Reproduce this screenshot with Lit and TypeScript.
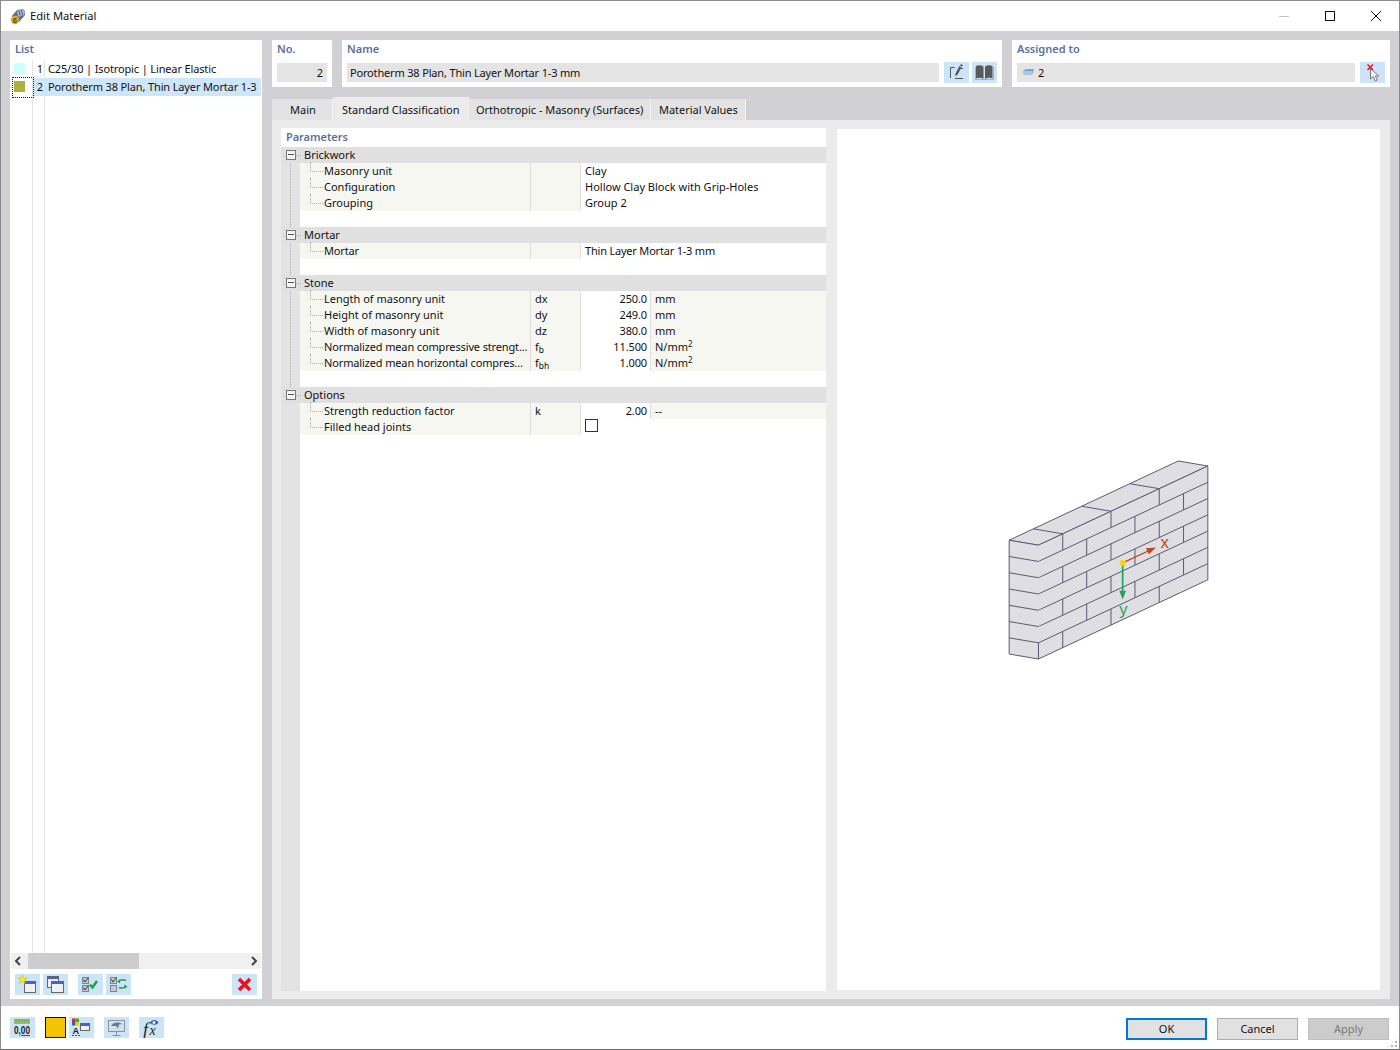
import { LitElement, html, css, svg } from "lit";
import { customElement } from "lit/decorators.js";

type Row = { l: string; s?: any; v?: string; u?: any; check?: boolean; text?: boolean; tight?: boolean };
const sup2 = html`N/mm<sup>2</sup>`;
const groups: { name: string; rows: Row[]; blank: boolean }[] = [
  { name: "Brickwork", blank: true, rows: [
    { l: "Masonry unit", v: "Clay", text: true },
    { l: "Configuration", v: "Hollow Clay Block with Grip-Holes", text: true },
    { l: "Grouping", v: "Group 2", text: true } ] },
  { name: "Mortar", blank: true, rows: [{ l: "Mortar", v: "Thin Layer Mortar 1-3 mm", text: true, tight: true }] },
  { name: "Stone", blank: true, rows: [
    { l: "Length of masonry unit", s: "dx", v: "250.0", u: "mm" },
    { l: "Height of masonry unit", s: "dy", v: "249.0", u: "mm" },
    { l: "Width of masonry unit", s: "dz", v: "380.0", u: "mm" },
    { l: "Normalized mean compressive strengt...", s: html`f<sub>b</sub>`, v: "11.500", u: sup2, tight: true },
    { l: "Normalized mean horizontal compres...", s: html`f<sub>bh</sub>`, v: "1.000", u: sup2, tight: true } ] },
  { name: "Options", blank: false, rows: [
    { l: "Strength reduction factor", s: "k", v: "2.00", u: "--" },
    { l: "Filled head joints", check: true } ] },
];

function wall() {
  const k = 48.9;
  const lines: any[] = [];
  for (let i = 1; i < 7; i++) {
    lines.push(svg`<polyline points="27,${268 + k * i} 115,${283 + k * i} 624,${45 + k * i}"/>`);
  }
  const yAt = (x: number) => 283 - 0.4676 * (x - 115);
  for (let c = 0; c < 7; c++) {
    const xs = c % 2 === 0 ? [188, 333, 478] : [260, 405, 551];
    for (const x of xs) {
      const y = yAt(x) + k * c;
      lines.push(svg`<line x1=${x} y1=${y} x2=${x} y2=${y + k}/>`);
    }
  }
  for (const x of [188, 333, 478]) {
    const y = yAt(x);
    lines.push(svg`<line x1=${x} y1=${y} x2=${x - 88} y2=${y - 15}/>`);
  }
  return html`<svg class="wall" width="201" height="200" viewBox="24 27 603 601">
    <g fill="#dedee3" stroke="#5a5a70" stroke-width="3" stroke-linejoin="round">
      <polygon points="27,268 535,30 624,45 115,283"/>
      <polygon points="115,283 624,45 624,387 115,625"/>
      <polygon points="27,268 115,283 115,625 27,610"/>
      ${lines}
    </g>
    <line x1="368" y1="336" x2="448" y2="299" stroke="#c2451e" stroke-width="4"/>
    <polygon points="468,290 438,292 447,310" fill="#c2451e"/>
    <line x1="368" y1="336" x2="368" y2="425" stroke="#1fa35c" stroke-width="5"/>
    <polygon points="368,446 358,420 378,420" fill="#1fa35c"/>
    <circle cx="368" cy="336" r="9" fill="#f7d417"/>
    <text x="482" y="290" font-size="50" fill="#c2451e" font-family="Liberation Sans, sans-serif">x</text>
    <text x="358" y="493" font-size="50" fill="#1fa35c" font-family="Liberation Sans, sans-serif">y</text>
  </svg>`;
}

const win = (x: number, y: number, w: number, h: number) => svg`
  <rect x=${x + .5} y=${y + .5} width=${w} height=${h} fill="#eef0f2" stroke="#666"/>
  <rect x=${x + 1} y=${y + 1} width=${w - 1} height="2" fill="#4a62c8"/>`;
const cb = (x: number, y: number, tick = true) => svg`
  <rect x=${x + .5} y=${y + .5} width="6" height="6" fill="#c3ccd6" stroke="#7b8794"/>
  ${tick ? svg`<path d="M${x + 1.5} ${y + 2.5}l1.500 2.500 3.500-4.500" fill="none" stroke="#333"/>` : ""}`;
const I = (c: any) => html`<svg width="25" height="21" viewBox="0 0 25 21">${c}</svg>`;

const icons = {
  edit: I(svg`<path d="M10.500 5.500h-4v10.500M11 16.500h8" fill="none" stroke="#555"/><path d="M11 14.500l.8-3.500 3.700-7 2 1.200-3.700 7z" fill="#555"/><path d="M16 3l1.300-.8 1.500 1-.8 1.300z" fill="#333"/><path d="M17 6.500h2" stroke="#555"/>`),
  book: I(svg`<path d="M4 4c2.500-1 5-1 7.500.5V17c-2.500-1.500-5-1.500-7.500-.5z M13 4.500c2.500-1.500 5-1.500 7.500-.5v12.500c-2.500-1-5-1-7.500.5z" fill="#5a5a5a"/><path d="M3.500 5v12.500h18V5" fill="none" stroke="#999" stroke-width=".7"/>`),
  cursor: I(svg`<path d="M10.500 6.500V17l2.700-2.300 2.100 4.300 2-1-2-4h3.500z" fill="#f3f3f3" stroke="#7a7a7a"/><path d="M7.500 2.500l5.500 5.500M13 2.500L7.500 8" stroke="#e8112d" stroke-width="1.500"/>`),
  newWin: I(svg`${win(9, 7, 11, 11)}<path d="M7.500 1l1.200 3 3.300.2-2.500 2 .8 3.200-2.800-1.800-2.800 1.800.8-3.200-2.500-2 3.300-.2z" fill="#f4ee1c" stroke="#bfae10" stroke-width=".5"/>`),
  copyWin: I(svg`${win(4, 2, 11, 11)}${win(8, 7, 12, 11)}`),
  checks: I(svg`${cb(4, 3)}${cb(4, 11)}<path d="M12 10.500l2.500 3 4.500-6.500" fill="none" stroke="#1ea34a" stroke-width="2.500"/>`),
  swap: I(svg`${cb(4, 3)}${cb(4, 11, false)}<path d="M13 7.500c2-2 4.500-2 7-1M20 12.500c-2 1.500-4.500 2-7 1" fill="none" stroke="#2b9d4a" stroke-width="1.500"/><path d="M11 7.500l3-2.500v4.500zM21.500 12.500l-3.200 2.500v-4.500z" fill="#2b9d4a"/>`),
  del: I(svg`<path d="M7 5l11 11M18 5L7 16" stroke="#e8111f" stroke-width="3.500"/>`),
  units: I(svg`<rect x="4" y="2" width="16" height="5" fill="#94bd6c"/><path d="M6 2v3M9 2v3M12 2v3M15 2v3M18 2v3" stroke="#6e9a4a" stroke-width=".7"/><path d="M11 18.500h9" stroke="#2a4fb8"/><text x="4" y="16.500" font-size="10" fill="#222" font-weight="700" textLength="16" lengthAdjust="spacingAndGlyphs" font-family="Liberation Sans, sans-serif">0,00</text>`),
  legend: I(svg`<rect x="3" y="1.500" width="3.500" height="3.500" fill="#e32222"/><rect x="6.500" y="1.500" width="3.500" height="3.500" fill="#34a844"/><rect x="3" y="5" width="3.500" height="3.500" fill="#2a5fd0"/><rect x="6.500" y="5" width="3.500" height="3.500" fill="#f0c910"/>${win(11, 6, 9, 7)}<text x="3.500" y="16.500" font-size="9" font-weight="700" fill="#222" font-family="Liberation Sans, sans-serif">A</text><path d="M3 18.500h8" stroke="#555" stroke-dasharray="2 1"/>`),
  view: I(svg`<rect x="4.500" y="3.500" width="16" height="11" fill="#d7dfe6" stroke="#8896a2"/><path d="M7 9c2-4 8-4.500 11-2l-3 .5-1 4-2-2.500z" fill="#5f7c96"/><path d="M12.500 14.500v3.500M8.500 18.500h8" stroke="#8896a2"/>`),
  fx: I(svg`<text x="4" y="18.500" font-size="18" font-style="italic" font-family="Liberation Serif, serif" fill="#222">f</text><text x="10.500" y="18" font-size="14" font-style="italic" font-family="Liberation Serif, serif" fill="#222">x</text><path d="M11 5.500c2-3.500 6.500-3.500 8.500 0-2 3-6.500 3-8.500 0z" fill="#3a56b0"/><circle cx="15" cy="5.500" r="1.500" fill="#e8eefc"/>`),
};

@customElement("app-root")
export class AppRoot extends LitElement {
  static styles = css`
    :host { display: block; width: 1400px; height: 1050px; font-family: "Noto Sans", "Open Sans", sans-serif; font-size: 11px; color: #111; }
    * { box-sizing: border-box; }
    svg { display: block; }
    .window { width: 1400px; height: 1050px; display: flex; flex-direction: column; border: 1px solid #8c8c8c; border-bottom-color: #6e6e6e; background: #d1d1d5; }
    .title { height: 30px; background: #fff; display: flex; align-items: center; padding-left: 8px; gap: 4px; font-size: 11.200px; flex: none; }
    .title .tt { padding-bottom: 2px; }
    .ctl { margin-left: auto; display: flex; }
    .ctl span { width: 46px; height: 30px; display: flex; align-items: center; justify-content: center; }
    .body { flex: 1; display: flex; gap: 10px; padding: 9px 9px 7px; min-height: 0; }
    .list { width: 252px; background: #fff; display: flex; flex-direction: column; position: relative; flex: none; }
    .cap { color: #5c7099; font-weight: 600; line-height: 16px; height: 20px; padding: 1px 5px; }
    .vline { position: absolute; top: 20px; bottom: 46px; width: 1px; background: #e4e4e4; }
    .vline.a { left: 22px; }
    .vline.b { left: 34px; }
    .items { flex: 1; }
    .item { height: 18px; display: flex; align-items: center; position: relative; }
    .item .sw { width: 11px; height: 11px; margin-left: 4px; margin-top: -2px; }
    .item .sw.c1 { background: #c8ffff; }
    .item .sw.c2 { background: #aeb03e; }
    .item .n { width: 13px; margin-left: 5px; text-align: right; padding-bottom: 2px; }
    .item .t { margin-left: 5px; white-space: nowrap; overflow: hidden; width: 213px; letter-spacing: -.14px; padding-bottom: 2px; }
    .item.sel::before { content: ""; position: absolute; left: 23px; right: 1px; top: 0; bottom: 0; background: #cde6f9; }
    .item.sel::after { content: ""; position: absolute; left: 2px; top: -1px; width: 20px; height: 19px; border: 1px dotted #222; }
    .item > * { position: relative; z-index: 1; }
    .sb { height: 16px; margin: 0 1px; background: #f0f0f0; display: flex; align-items: center; justify-content: space-between; position: relative; padding: 0 3px; }
    .thumb { position: absolute; left: 17px; width: 111px; top: 0; bottom: 0; background: #cdcdcd; }
    .tools { height: 30px; padding: 5px; display: flex; gap: 3px; }
    .btn { width: 25px; height: 21px; background: #cce4f7; flex: none; }
    .tools .g { margin-left: 7px; }
    .tools .end { margin-left: auto; }
    .right { flex: 1; display: flex; flex-direction: column; min-width: 0; }
    .top { display: flex; gap: 10px; height: 47px; flex: none; }
    .box { background: #fff; padding: 0 5px; }
    .box.no { width: 60px; }
    .box.name { width: 660px; }
    .box.asg { flex: 1; }
    .box .cap { padding-left: 0; }
    .field { display: flex; gap: 5px; height: 21px; }
    .input { flex: 1; height: 19px; margin-top: 3px; background: #e4e4e4; line-height: 19px; padding: 0 3px; white-space: nowrap; display: flex; align-items: center; }
    .input.nm { letter-spacing: -.17px; }
    .input.as { padding-left: 6px; gap: 4px; }
    .box .btn { margin-top: 2px; }
    .field.two .btn + .btn { margin-left: -2px; }
    .input.r { justify-content: flex-end; padding-right: 4px; }
    .tabs { display: flex; height: 23px; margin-top: 10px; align-items: flex-end; flex: none; }
    .tab { height: 21px; background: #e3e3e3; padding: 0 8px; line-height: 21px; white-space: nowrap; border-right: 1px solid #f4f4f4; flex: none; }
    .tab.on { height: 23px; background: #ebebeb; line-height: 25px; border: 0; }
    .tab.t1 { width: 61px; padding-left: 18px; }
    .tab.t2 { width: 136px; padding-left: 9px; }
    .tab.t3 { width: 182px; padding-left: 7px; letter-spacing: -.03px; }
    .tab.t4 { width: 95px; letter-spacing: -.03px; }
    .panel { flex: 1; background: #ebebeb; display: flex; gap: 11px; padding: 8px 10px 8px 9px; min-height: 0; }
    .params { width: 545px; background: #fff; display: flex; flex-direction: column; flex: none; position: relative; }
    .pcap { height: 19px; padding: 0 5px; line-height: 17px; color: #5c7099; font-weight: 600; letter-spacing: -.05px; }
    .tree { flex: 1; background: #e3e3e3; display: flex; flex-direction: column; position: relative; }
    .trunk { position: absolute; left: 9px; top: 12px; height: 236px; border-left: 1px dotted #aaa; }
    .gh { height: 16px; background: #e0e0e0; line-height: 16px; padding-left: 23px; position: relative; }
    .gh i { position: absolute; left: 5px; top: 3px; width: 10px; height: 10px; border: 1px solid #777; background: #f4f4f4; }
    .gh i::after { content: ""; position: absolute; left: 1px; right: 1px; top: 3px; height: 2px; border-top: 1px solid #555; }
    .gh::after { content: ""; position: absolute; left: 15px; width: 5px; top: 8px; border-top: 1px dotted #aaa; }
    .row { height: 16px; margin-left: 19px; display: grid; grid-template-columns: 231px 50px 70px 1fr; background: #fff; line-height: 16px; }
    .blank { height: 16px; margin-left: 19px; background: #fff; }
    .fill { flex: 1; margin-left: 19px; background: #fff; }
    .c { background: #f7f7f2; border-right: 1px solid #dedede; padding: 0 4px; white-space: nowrap; overflow: hidden; }
    .c.lb { padding-left: 24px; position: relative; overflow: visible; }
    .c.lb.tight { letter-spacing: -.14px; }
    .c.lb::before { content: ""; position: absolute; left: 10px; top: -1px; height: 9px; width: 12px; border-left: 1px dotted #aaa; border-bottom: 1px dotted #aaa; }
    .c.val { text-align: right; background: #fff; padding-right: 3px; letter-spacing: -.12px; }
    .c.val.txt { text-align: left; padding-left: 4px; grid-column: 3 / 5; border: 0; letter-spacing: 0; }
    .c.val.txt.tight { letter-spacing: -.2px; }
    .c.u { border: 0; padding-left: 4px; }
    .c.none { background: #fff; border: 0; padding: 0 0 0 4px; grid-column: 3 / 5; }
    .check { width: 13px; height: 13px; border: 1px solid #333; background: #fff; }
    sup { font-size: 8px; line-height: 0; vertical-align: 4px; }
    sub { font-size: 8.500px; line-height: 0; vertical-align: -2px; }
    .preview { flex: 1; margin: 1px 0; background: #fff; display: flex; align-items: center; justify-content: center; }
    .foot { height: 43px; background: #fff; display: flex; align-items: flex-start; padding: 11px 0 0 9px; position: relative; flex: none; }
    .swatch { width: 21px; height: 21px; background: #f5c400; border: 1px solid #111; margin: 0 3px 0 10px; }
    .foot .btn.a { margin-left: 10px; }
    .actions { margin-left: auto; display: flex; gap: 10px; padding-right: 10px; margin-top: 1px; }
    .action { width: 81px; height: 22px; background: #e1e1e1; border: 1px solid #adadad; text-align: center; line-height: 20px; }
    .action.def { border: 2px solid #0078d7; line-height: 18px; }
    .action.dis { background: #ccc; color: #7b7b7b; border-color: #bfbfbf; }
    .grip { position: absolute; right: 1px; bottom: 1px; width: 11px; height: 11px; background: radial-gradient(circle at 1px 1px, #b5b5b5 1px, transparent 1.100px) 0 0 / 4px 4px; clip-path: polygon(100% 0, 100% 100%, 0 100%); }
  `;

  render() {
    return html`<div class="window">
      <div class="title">
        <svg width="17" height="17" viewBox="0 0 17 17"><path d="M3 8l5-6 6-1 2 2v4l-6 7H5z" fill="#5d6d8f"/><path d="M8 3l6-2 2 2-1 4-6 2z" fill="#aeb9cf"/><path d="M10 2.500l1 5M12.500 2l1 5" stroke="#39425a" stroke-width=".8"/><circle cx="6" cy="12" r="4.200" fill="#dcae1e"/><text x="3.800" y="15" font-size="7.500" font-weight="700" fill="#554a20" font-family="Liberation Sans, sans-serif">6</text></svg>
        <span class="tt">Edit Material</span>
        <div class="ctl">
          <span><svg width="10" height="10"><path d="M0 5.500h10" stroke="#c4c4c4"/></svg></span>
          <span><svg width="10" height="10"><rect x=".5" y=".5" width="9" height="9" fill="none" stroke="#111"/></svg></span>
          <span><svg width="10" height="10"><path d="M0 0l10 10M10 0L0 10" stroke="#111"/></svg></span>
        </div>
      </div>
      <div class="body">
        <div class="list">
          <div class="cap">List</div>
          <div class="vline a"></div><div class="vline b"></div>
          <div class="items">
            <div class="item"><span class="sw c1"></span><span class="n">1</span><span class="t">C25/30 | Isotropic | Linear Elastic</span></div>
            <div class="item sel"><span class="sw c2"></span><span class="n">2</span><span class="t">Porotherm 38 Plan, Thin Layer Mortar 1-3</span></div>
          </div>
          <div class="sb"><div class="thumb"></div>
            <svg width="8" height="10"><path d="M6 1L2 5l4 4" fill="none" stroke="#444" stroke-width="2"/></svg>
            <svg width="8" height="10"><path d="M2 1l4 4-4 4" fill="none" stroke="#444" stroke-width="2"/></svg>
          </div>
          <div class="tools">
            <div class="btn">${icons.newWin}</div><div class="btn">${icons.copyWin}</div>
            <div class="btn g">${icons.checks}</div><div class="btn">${icons.swap}</div>
            <div class="btn end">${icons.del}</div>
          </div>
        </div>
        <div class="right">
          <div class="top">
            <div class="box no"><div class="cap">No.</div><div class="field"><div class="input r">2</div></div></div>
            <div class="box name"><div class="cap">Name</div><div class="field two"><div class="input nm">Porotherm 38 Plan, Thin Layer Mortar 1-3 mm</div><div class="btn">${icons.edit}</div><div class="btn">${icons.book}</div></div></div>
            <div class="box asg"><div class="cap">Assigned to</div><div class="field"><div class="input as"><svg width="11" height="9" viewBox="0 0 11 9"><path d="M0 3l3-2h8l-2 6H1z" fill="#7aa5d8"/><path d="M0 3h9v4H1z" fill="#a9c5e6"/></svg>2</div><div class="btn">${icons.cursor}</div></div></div>
          </div>
          <div class="tabs">
            <div class="tab t1">Main</div>
            <div class="tab on t2">Standard Classification</div>
            <div class="tab t3">Orthotropic - Masonry (Surfaces)</div>
            <div class="tab t4">Material Values</div>
          </div>
          <div class="panel">
            <div class="params">
              <div class="pcap">Parameters</div>
              <div class="tree">
                <div class="trunk"></div>
                ${groups.map((g) => html`
                  <div class="gh"><i></i>${g.name}</div>
                  ${g.rows.map((r) => html`<div class="row">
                    <div class="c lb ${r.tight ? "tight" : ""}">${r.l}</div>
                    <div class="c">${r.s ?? ""}</div>
                    ${r.check
                      ? html`<div class="c none"><div class="check"></div></div>`
                      : r.text
                      ? html`<div class="c val txt ${r.tight ? "tight" : ""}">${r.v}</div>`
                      : html`<div class="c val">${r.v}</div><div class="c u">${r.u}</div>`}
                  </div>`)}
                  ${g.blank ? html`<div class="blank"></div>` : ""}
                `)}
                <div class="fill"></div>
              </div>
            </div>
            <div class="preview">${wall()}</div>
          </div>
        </div>
      </div>
      <div class="foot">
        <div class="btn">${icons.units}</div>
        <div class="swatch"></div>
        <div class="btn">${icons.legend}</div>
        <div class="btn a">${icons.view}</div>
        <div class="btn a">${icons.fx}</div>
        <div class="actions">
          <div class="action def">OK</div><div class="action">Cancel</div><div class="action dis">Apply</div>
        </div>
        <div class="grip"></div>
      </div>
    </div>`;
  }
}
